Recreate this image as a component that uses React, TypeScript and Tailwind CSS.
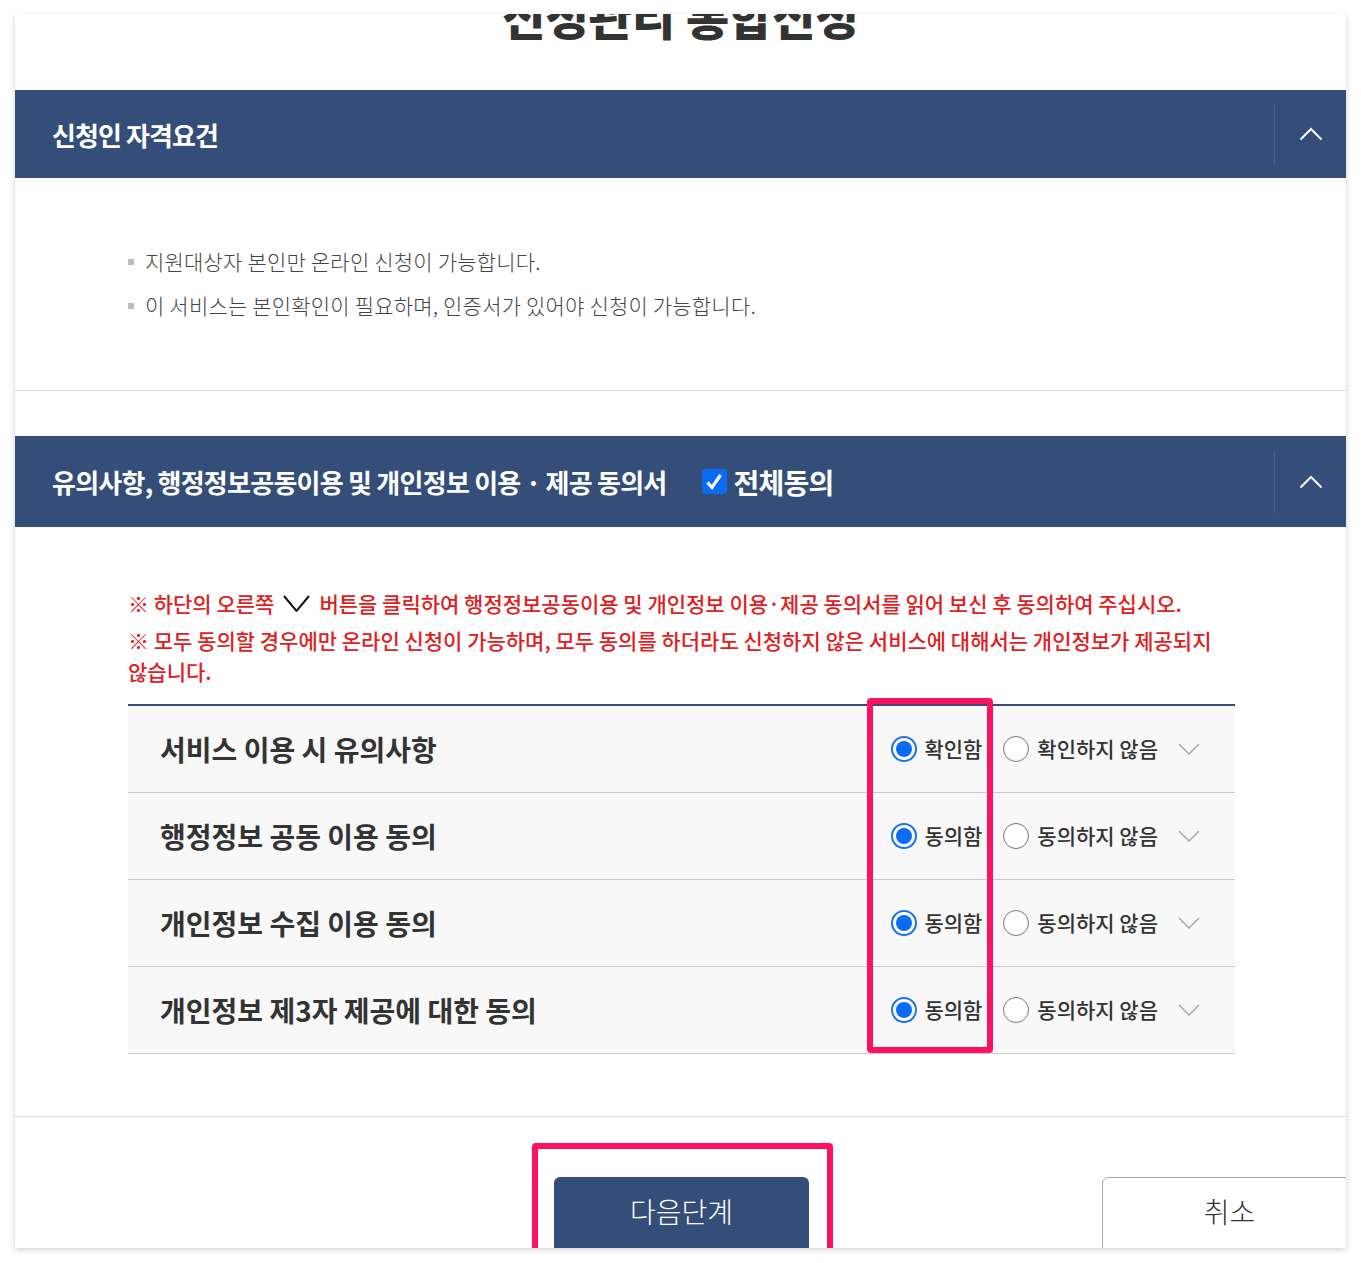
import { useState } from "react";

const rows = [
  { title: "서비스 이용 시 유의사항", yes: "확인함", no: "확인하지 않음" },
  { title: "행정정보 공동 이용 동의", yes: "동의함", no: "동의하지 않음" },
  { title: "개인정보 수집 이용 동의", yes: "동의함", no: "동의하지 않음" },
  { title: "개인정보 제3자 제공에 대한 동의", yes: "동의함", no: "동의하지 않음" },
];

function ChevronUp() {
  return (
    <svg width="24" height="14" viewBox="0 0 24 14" fill="none">
      <path d="M1.5 12.5 L12 2 L22.5 12.5" stroke="white" strokeWidth="2" />
    </svg>
  );
}

function ChevronDown({ color = "#a8a8a8", w = 22, h = 12, sw = 1.5 }: { color?: string; w?: number; h?: number; sw?: number }) {
  return (
    <svg width={w} height={h} viewBox={`0 0 ${w} ${h}`} fill="none">
      <path d={`M1 1 L${w / 2} ${h - 1} L${w - 1} 1`} stroke={color} strokeWidth={sw} />
    </svg>
  );
}

function Radio({ checked }: { checked: boolean }) {
  return checked ? (
    <span className="w-[26px] h-[26px] rounded-full border-2 border-[#1a73e8] bg-white flex items-center justify-center shrink-0">
      <span className="w-[16px] h-[16px] rounded-full bg-[#0b6cf3]" />
    </span>
  ) : (
    <span className="w-[26px] h-[26px] rounded-full border border-[#767676] bg-white shrink-0" />
  );
}

function SectionHeader({ children }: { children: React.ReactNode }) {
  return (
    <div className="flex items-stretch bg-[#344e79]">
      <div className="flex-1 flex items-center pl-[37px]">{children}</div>
      <div className="w-[72px] flex items-center justify-center my-[14px] border-l border-[#4a618a]">
        <ChevronUp />
      </div>
    </div>
  );
}

export default function App() {
  const [answers, setAnswers] = useState<boolean[]>([true, true, true, true]);

  return (
    <div className="min-h-[1263px] bg-white pl-[15px] pt-[14px] font-['Noto_Sans_CJK_KR',sans-serif]">
      <div className="relative w-[1331px] h-[1234px] overflow-hidden bg-white shadow-[0_2px_6px_rgba(0,0,0,0.18)]">
        {/* Title (scrolled) */}
        <div className="h-[76px] overflow-hidden">
          <h1 className="-mt-[23px] text-center text-[47px] leading-none font-extrabold text-[#333] tracking-[0px]">
            신청관리 통합신청
          </h1>
        </div>

        {/* 신청인 자격요건 */}
        <SectionHeader>
          <h2 className="text-[26px] font-bold text-white tracking-[-0.9px] h-[88px] flex items-center">신청인 자격요건</h2>
        </SectionHeader>
        <ul className="pl-[113px] pt-[62px] pb-[62px] border-b border-[#dcdcdc]">
          {["지원대상자 본인만 온라인 신청이 가능합니다.", "이 서비스는 본인확인이 필요하며, 인증서가 있어야 신청이 가능합니다."].map((t) => (
            <li key={t} className="flex items-center h-[44px] text-[21px] text-[#444] font-light tracking-[0.2px]">
              <span className="w-[6px] h-[6px] bg-[#bbbbbb] mr-[11px]" />
              {t}
            </li>
          ))}
        </ul>

        <div className="h-[45px]" />

        {/* 동의서 */}
        <SectionHeader>
          <div className="h-[91px] flex items-center">
            <h2 className="text-[26px] font-bold text-white tracking-[-0.75px]">
              유의사항, 행정정보공동이용 및 개인정보 이용 · 제공 동의서
            </h2>
            <label className="ml-[35px] flex items-center gap-[7px]">
              <span className="w-[25px] h-[25px] rounded-[3px] bg-[#0b6cf3] flex items-center justify-center">
                <svg width="20" height="20" viewBox="0 0 20 20" fill="none">
                  <path d="M3.5 10.5 L8 15.5 L16.5 3" stroke="white" strokeWidth="3.2" />
                </svg>
              </span>
              <span className="text-[28px] font-bold text-white tracking-[-0.8px]">전체동의</span>
            </label>
          </div>
        </SectionHeader>

        <div className="pl-[113px] pr-[111px] pt-[61px] pb-[62px] border-b border-[#dcdcdc]">
          <p className="text-[21px] leading-[31px] font-medium text-[#e0201e] tracking-[0px] flex items-center whitespace-nowrap">
            ※ 하단의 오른쪽
            <span className="mx-[9px] inline-flex">
              <ChevronDown color="#111" w={27} h={17} sw={2} />
            </span>
            버튼을 클릭하여 행정정보공동이용 및 개인정보 이용·제공 동의서를 읽어 보신 후 동의하여 주십시오.
          </p>
          <p className="mt-[6px] text-[21px] leading-[31px] font-medium text-[#e0201e] tracking-[0px]">
            <span className="whitespace-nowrap">
              ※ 모두 동의할 경우에만 온라인 신청이 가능하며, 모두 동의를 하더라도 신청하지 않은 서비스에 대해서는 개인정보가 제공되지
            </span>
            <br />
            않습니다.
          </p>

          <div className="mt-[17px] border-t-2 border-[#344e79]">
            {rows.map((r, i) => (
              <div key={r.title} className="h-[87px] flex items-center bg-[#f8f8f8] border-b border-[#cccccc] pl-[32px] pr-[35px]">
                <h3 className="flex-1 text-[28px] font-bold text-[#333] tracking-[0px]">{r.title}</h3>
                <button
                  className="flex items-center gap-[7px] text-[21px] font-medium text-[#333]"
                  onClick={() => setAnswers(answers.map((a, j) => (j === i ? true : a)))}
                >
                  <Radio checked={answers[i]} />
                  {r.yes}
                </button>
                <button
                  className="ml-[21px] flex items-center gap-[8px] text-[21px] font-medium text-[#333]"
                  onClick={() => setAnswers(answers.map((a, j) => (j === i ? false : a)))}
                >
                  <Radio checked={!answers[i]} />
                  {r.no}
                </button>
                <span className="ml-[20px] flex">
                  <ChevronDown />
                </span>
              </div>
            ))}
          </div>
        </div>

        {/* Buttons */}
        <div className="pt-[60px] pl-[539px] flex gap-[293px]">
          <button className="w-[255px] h-[80px] shrink-0 rounded-t-[6px] bg-[#344e79] text-white text-[28px] font-light pb-[12px]">
            다음단계
          </button>
          <button className="w-[255px] h-[80px] shrink-0 rounded-t-[6px] border border-[#aaaaaa] bg-white text-[#333] text-[28px] font-light pb-[12px]">
            취소
          </button>
        </div>

        {/* highlight annotations */}
        <div className="absolute left-[852px] top-[684px] w-[126px] h-[355px] border-[6px] border-[#ff1060] rounded-[4px] pointer-events-none" />
        <div className="absolute left-[517px] top-[1129px] w-[301px] h-[140px] border-[6px] border-[#ff1060] rounded-[4px] pointer-events-none" />
      </div>
    </div>
  );
}
